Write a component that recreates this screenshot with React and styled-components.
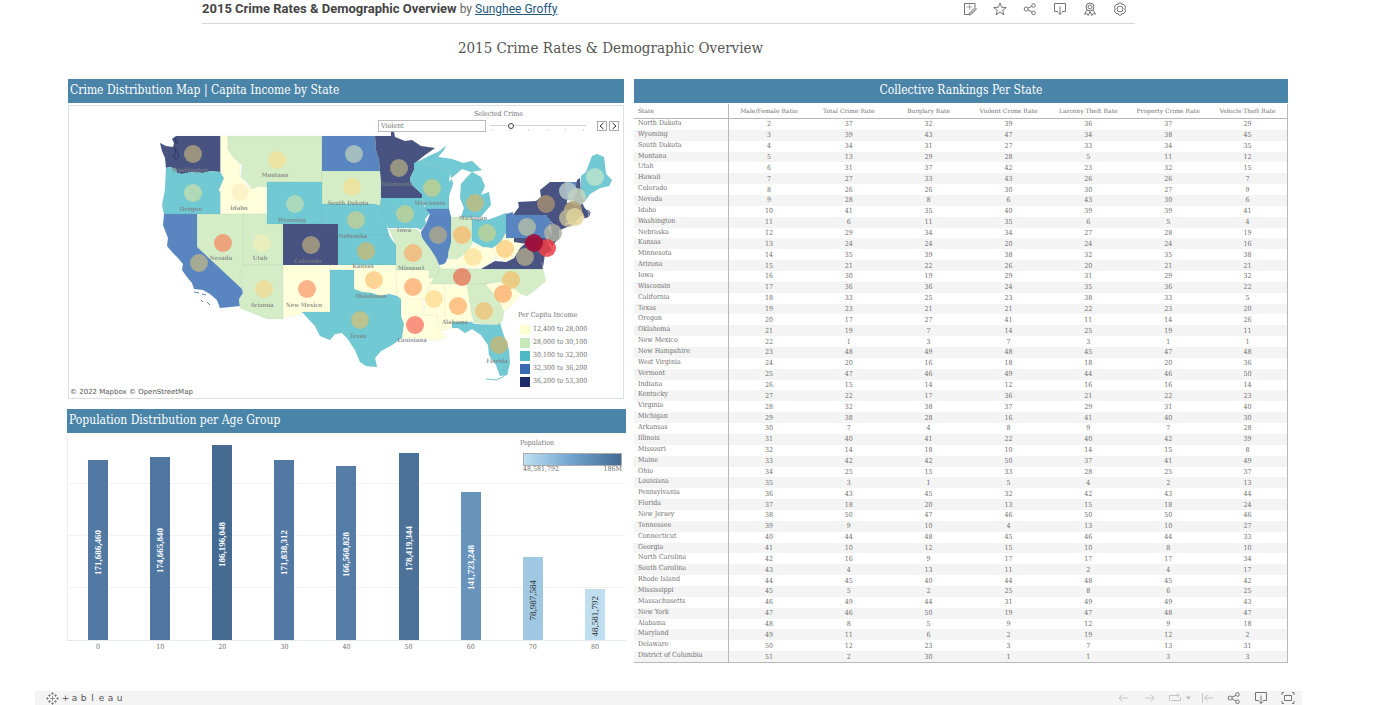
import React, { useState } from "react";
import styled, { createGlobalStyle } from "styled-components";

const serif = `"DejaVu Serif Condensed", "DejaVu Serif", serif`;
const sans = `Roboto, "Liberation Sans", sans-serif`;
const BAR_BLUE = "#4a84a8";

const GlobalStyle = createGlobalStyle`
  * { box-sizing: border-box; }
  body { margin: 0; background: #fff; color: #707070; font-family: ${serif}; }
  button, select, input { font: inherit; color: inherit; margin: 0; padding: 0; border: 0; background: none; }
`;

const Page = styled.div`
  margin: 0 98px 0 35px;
`;

const TopBar = styled.header`
  margin: 0 167px;
  height: 24px;
  padding: 0 8px 6px 0;
  display: flex;
  align-items: center;
  justify-content: space-between;
  border-bottom: 1px solid #d8d8d8;
`;

const TopTitle = styled.div`
  font: 12px/18px ${sans};
  color: #666;
  white-space: nowrap;
  strong { color: #444; margin-right: 3px; font-size: 13px; }
  a { color: #24587f; }
`;

const Tools = styled.div`
  display: flex;
  align-items: center;
  gap: ${(p) => p.$gap}px;
`;

const IconButton = styled.button`
  width: 14px;
  height: 14px;
  color: ${(p) => (p.$muted ? "#c4c4c4" : "#747474")};
  svg { display: block; width: 14px; height: 14px; fill: none; stroke: currentColor; stroke-width: 1; }
`;

const Dashboard = styled.main`
  padding: 0 14px 0 32px;
`;

const Title = styled.h1`
  margin: 0;
  padding-right: 134px;
  height: 55px;
  font-size: 15px;
  line-height: 48px;
  font-weight: 400;
  text-align: center;
  color: #555;
`;

const Columns = styled.div`
  display: grid;
  grid-template-columns: 559fr 654fr;
  gap: 8px;
  align-items: start;
`;

const Stack = styled.div`
  display: flex;
  flex-direction: column;
  gap: 10px;
`;

const Panel = styled.section`
  display: flex;
  flex-direction: column;
  gap: ${(p) => p.$gap || 0}px;
  margin: 0 ${(p) => p.$inset || 0}px 0 0;
  padding-left: ${(p) => (p.$inset ? 1 : 0)}px;
`;

const PanelTitle = styled.h2`
  margin: 0;
  padding: 0 2px;
  height: 24px;
  line-height: 22px;
  font-size: 12px;
  font-weight: 400;
  color: #fff;
  background: ${BAR_BLUE};
  text-align: ${(p) => (p.$center ? "center" : "left")};
`;

const MapBox = styled.div`
  position: relative;
  border: 1px solid #dcdfe1;
  > svg { display: block; width: 100%; height: auto; }
`;

const CrimeControl = styled.div`
  position: absolute;
  top: 2px;
  right: 4px;
  width: 241px;
`;

const ControlLabel = styled.label`
  display: block;
  text-align: center;
  font-size: 7px;
  line-height: 12px;
`;

const ControlRow = styled.div`
  display: flex;
  align-items: center;
  gap: 4px;
`;

const CrimeSelect = styled.select`
  width: 108px;
  height: 12px;
  padding-left: 2px;
  appearance: none;
  border: 1px solid #bbb;
  background: #fff;
  font-size: 7px;
  line-height: 10px;
`;

const SliderWrap = styled.div`
  width: 96px;
  height: 12px;
  padding-top: 2px;
`;

const Slider = styled.input`
  display: block;
  width: 100%;
  height: 7px;
  appearance: none;
  background: linear-gradient(#d4d4d4, #d4d4d4) center / 100% 1px no-repeat;
  &::-webkit-slider-thumb {
    appearance: none;
    width: 6px;
    height: 6px;
    border: 1px solid #444;
    border-radius: 50%;
    background: #fff;
  }
`;

const Ticks = styled.div`
  display: flex;
  justify-content: space-between;
  padding: 0 2px;
  i { width: 1px; height: 2px; background: #ddd; }
`;

const Arrows = styled.div`
  display: flex;
  gap: 2px;
  margin-left: 7px;
`;

const ArrowButton = styled.button`
  width: 10px;
  height: 10px;
  border: 1px solid #aaa;
  svg { display: block; width: 8px; height: 8px; fill: none; stroke: #333; }
`;

const IncomeLegend = styled.div`
  position: absolute;
  right: 30px;
  bottom: 10px;
  width: 75px;
  font-size: 7px;
  line-height: 13px;
  white-space: nowrap;
`;

const LegendTitle = styled.div`
  font-size: 7px;
  line-height: 16px;
`;

const LegendRow = styled.div`
  display: flex;
  align-items: center;
  gap: 3px;
  height: 13px;
  padding-left: 2px;
  &::before { content: ""; width: 10px; height: 10px; background: ${(p) => p.$color}; }
`;

const Credit = styled.div`
  position: absolute;
  left: 1px;
  bottom: 0;
  font: 7px/12px "DejaVu Sans", sans-serif;
  color: #555;
`;

const Chart = styled.div`
  position: relative;
  padding-top: 1px;
`;

const Plot = styled.div`
  display: flex;
  height: 207px;
  align-items: flex-end;
  box-shadow: inset 1px 0 #eee;
  border-bottom: 1px solid #e4eaf0;
  background: linear-gradient(#f3f3f3, #f3f3f3) 0 49px / 100% 1px no-repeat,
    linear-gradient(#f3f3f3, #f3f3f3) 0 101px / 100% 1px no-repeat,
    linear-gradient(#f3f3f3, #f3f3f3) 0 153px / 100% 1px no-repeat;
`;

const BarSlot = styled.div`
  flex: 1;
  height: 100%;
  display: flex;
  align-items: flex-end;
  justify-content: center;
`;

const Bar = styled.div`
  width: 20px;
  display: flex;
  align-items: center;
  justify-content: center;
  padding-top: 4px;
  background: ${(p) => p.$color};
  color: ${(p) => (p.$dark ? "#333" : "#fff")};
  span {
    writing-mode: vertical-rl;
    rotate: 180deg;
    font-family: "Liberation Serif", serif;
    font-size: 9px;
    line-height: 20px;
    font-weight: ${(p) => (p.$dark ? 400 : 700)};
  }
`;

const Axis = styled.div`
  display: flex;
  font-size: 7px;
  line-height: 13px;
  span { flex: 1; text-align: center; }
`;

const PopLegend = styled.div`
  position: absolute;
  top: 4px;
  right: 4px;
  width: 102px;
  font-size: 7px;
  line-height: 12px;
`;

const Ramp = styled.div`
  height: 13px;
  margin: 4px 0 0 3px;
  border: 1px solid #aaa;
  background: linear-gradient(90deg, #bfe0f2, #6ea3cd 50%, #426b93);
`;

const RampLabels = styled.div`
  display: flex;
  justify-content: space-between;
  padding-left: 3px;
  line-height: 6px;
`;

const Rankings = styled.table`
  width: 100%;
  height: 559px;
  table-layout: fixed;
  border-spacing: 0;
  border-bottom: 1px solid #b8b8b8;
  font-size: 7px;
  line-height: 10px;
  text-align: center;
  th, td { padding: 0; font-weight: 400; }
  thead th {
    height: 15px;
    border-bottom: 1px solid #b8b8b8;
    font-family: "DejaVu Serif", serif;
    font-size: 6px;
    white-space: nowrap;
  }
  th:first-child {
    width: 95px;
    padding-left: 4px;
    text-align: left;
    border-right: 1px solid #b8b8b8;
  }
  tbody th { vertical-align: top; line-height: 9px; }
  tr > :last-child { border-right: 1px solid #b8b8b8; }
  tbody tr:nth-child(even) { background: #f4f4f4; }
`;

const Footer = styled.footer`
  margin-top: 28px;
  height: 14px;
  padding: 0 7px 0 11px;
  display: flex;
  align-items: center;
  justify-content: space-between;
  background: #f4f4f4;
`;

const Logo = styled.div`
  display: flex;
  align-items: center;
  font: 9px/14px "DejaVu Sans", sans-serif;
  color: #555;
  svg { width: 13px; height: 13px; margin-right: 2px; fill: none; stroke: #777; }
  span { width: 9px; text-align: center; }
`;

const ReplayGroup = styled.div`
  display: flex;
  align-items: center;
  gap: 3px;
  margin: 0 -5px 0 -2px;
`;

const CaretButton = styled.button`
  width: 7px;
  height: 14px;
  svg { display: block; width: 7px; height: 14px; fill: #bcbcbc; }
`;

const NAVY = "#485382";
const BLUE = "#5986c1";
const TEAL = "#70c9d3";
const GREEN = "#d4edc7";
const CREAM = "#ffffdb";

const states = [
  [NAVY, "M160 143 166 146 173 147 174 143 172 139 176 136H220.500V172L211 171 203 173 192 172 182 174 177 173 176 169 170 167 166 168 165 158 162 151Z"],
  [TEAL, "M166 168 170 167 176 169 177 173 182 174 192 172 203 173 211 171 220 172 224 178 219 190 220.500 193V214H164L162 205 165 190Z"],
  [CREAM, "M220.500 136H228V149L233 157 240 164 240 176 245 182 250 188 267 186V214H220.500V193L219 190 224 178 220.500 172Z"],
  [GREEN, "M228 136H322V182H267V187L259 186 252 189 246 181 241 177 242 165 233 157 228 149Z"],
  [BLUE, "M322 136H375L376 150 379 160 380 171H322Z"],
  [GREEN, "M322 171H380V177L382 181V200L381 206 375 204H322Z"],
  [TEAL, "M267 182H322V224H267Z"],
  [NAVY, "M283 224H338V265H283Z"],
  [TEAL, "M322 204H375L381 206 385 218 389 235H338V224H322Z"],
  [TEAL, "M338 235H389L392 240 396 245V265H338Z"],
  [GREEN, "M243 214H267V224H283V265H243Z"],
  [GREEN, "M197 214H243V270L240 273 241 282 242 289 197 247Z"],
  [BLUE, "M164 214H197V247L242 289 243 293 239 299 240 306 220 308 217 300 210 294 203 290 194 289 192 283 187 277 182 270 183 264 178 258 173 253 167 246 168 238 163 225Z"],
  [GREEN, "M243 265H283V319H267L240 308 239 300 243 293 241 282 240 273Z"],
  [CREAM, "M283 265H330V312H302V314L283 318Z"],
  [CREAM, "M330 265H396L397 273V296L389 294 380 296 372 293 362 292 354 289V270H330Z"],
  [TEAL, "M330 270H354V289L362 292 372 293 380 296 389 294 401 297V316L404 324 402 338 392 345 381 351 375 358 377 367 366 366 360 362 355 350 347 338 342 333 335 334 330 340 320 336 315 326 302 312H330Z"],
  [NAVY, "M375 136H391V131L394 132 395 137 405 141 412 140 421 146 435 148 425 155 415 163 414 170 410 178 411 184 422 194V198H381V181L380 171 379 160 376 150Z"],
  [TEAL, "M381 198H422L424 206 430 213 425 219 426 224 421 230 418 228H388L384 218 380 206Z"],
  [TEAL, "M414 163 421 160 425 163 445 169 450 173 449 182 452 179 453 184 449 196V209H426L422 198V194L411 184 410 178 414 170Z"],
  [TEAL, "M421 160 431 155 438 152 446 146 444 150 438 157 452 159 463 163 472 161 482 170 471 172 462 169 455 175 451 178 450 173 445 169 425 163Z"],
  [TEAL, "M461 217 464 208 460 198 461 184 467 177 472 172 481 177 485 186 481 195 489 192 491 205 484 213 481 217Z"],
  [BLUE, "M426 209H449L451 217V243L448 257 445 264 439 265 436 258 431 250 422 239 421 232 426 224 430 214Z"],
  [GREEN, "M451 217H472V246L466 253 457 259 449 260 448 253 451 243Z"],
  [TEAL, "M472 219 487 220 496 217 506 213V233L500 243 492 248 483 247 472 241Z"],
  [CREAM, "M438 269 445 263 449 259 457 259 466 253 472 244 483 247 492 248 496 257 484 268Z"],
  [GREEN, "M433 269H511L501 277 487 284H430Z"],
  [GREEN, "M389 229H418L423 239 431 250 436 258 439 265 441 268 434 278H429V270H396V245Z"],
  [CREAM, "M396 270H429V278H434L430 285 425 300H402L397 296Z"],
  [CREAM, "M401 299H423L424 315H437L440 328 446 338 434 341 422 338 402 338 404 324 401 316Z"],
  [CREAM, "M425 300 430 284H445V330H439L437 315H424Z"],
  [CREAM, "M445 284H467L472 310V322H452L453 328 445 330Z"],
  [GREEN, "M467 284H486L498 299 504 312 502 322 497 325 474 323 471 310Z"],
  [TEAL, "M452 322H472L474 324 497 325 500 323 503 333 509 350 510 363 507 375 500 376 496 365 489 355 488 345 481 335 472 329 465 333 458 328 452 328Z"],
  [CREAM, "M485 284 497 282 508 283 521 294 514 303 504 312 498 299Z"],
  [GREEN, "M486 284 501 277 511 269H543L546 281 535 290 527 296 521 294 508 283 497 282Z"],
  [NAVY, "M481 269 495 261 506 262 514 258 520 248 527 242 536 248 540 258 543 269Z"],
  [CREAM, "M492 249 500 243 506 233V238H514V242L524 240 520 248 514 258 506 262 498 259Z"],
  [NAVY, "M514 238H546L552 251 545 254 543 267 539 257 536 248 527 244 514 242Z"],
  [NAVY, "M513 215 519 207 518 202 536 201 541 197 540 190 550 182H566L567 200 566 218 565 225 577 223 560 230 549 220 546 215Z"],
  [BLUE, "M506 214 513 212V215H546L551 221 548 229 552 234 546 238H506Z"],
  [NAVY, "M550 222 559 228 559 238 552 246 547 239 552 234Z"],
  [BLUE, "M565 182H578V200H567Z"],
  [NAVY, "M577 180 580 178 581 196 585 201 579 204 574 202Z"],
  [NAVY, "M566 203 582 202 584 207 589 213 587 218 581 215 575 222 566 222Z"],
  [TEAL, "M581 176 586 172 592 156 597 154 604 157 606 174 612 180 609 186 600 188 590 194 585 201 581 196Z"],
];

const bubbles = [
  [193, 154, "#a99f7f"], [277, 160, "#f2e19c"], [193, 193, "#bcdcb1"], [240, 192, "#fcf3c5"],
  [295, 204, "#b6dcb8"], [354, 154, "#b0c5bd"], [352, 187, "#efe198"], [356, 220, "#bdcf9a"],
  [399, 168, "#a5a083"], [432, 188, "#bccf92"], [405, 214, "#bdd29a"], [475, 203, "#bebd82"],
  [223, 243, "#f29870"], [262, 243, "#edeebb"], [311, 245, "#a89e7f"], [366, 251, "#c0bd80"],
  [199, 263, "#b3b08d"], [264, 289, "#efdd99"], [307, 289, "#fba97b"], [360, 320, "#c5c383"],
  [374, 280, "#fdcd88"], [413, 253, "#f4b87a"], [438, 235, "#aaa68e"], [462, 235, "#f5be76"],
  [487, 233, "#bbd199"], [473, 257, "#fee4a1"], [505, 249, "#fdd186"], [525, 257, "#a6a38c"],
  [527, 227, "#b0bba9"], [546, 204, "#a38c72"], [595, 177, "#b9e3cb"], [568, 191, "#b7c8cb"],
  [577, 197, "#c5d5bf"], [573, 210, "#bba777"], [568, 218, "#bcb798"], [575, 217, "#e5d79b"],
  [553, 233, "#aeb0a1"], [547, 248, "#ee4048"], [534, 243, "#a90832"], [462, 277, "#e87e63"],
  [511, 280, "#f1c578"], [503, 294, "#fdb675"], [484, 311, "#edc77c"], [458, 306, "#fdb979"],
  [434, 299, "#fde09a"], [413, 287, "#fdb37a"], [415, 325, "#f98270"], [499, 345, "#c1b879"],
];

const stateLabels = [
  [190, 172, "Washington"], [275, 177, "Montana"], [191, 211, "Oregon"], [239, 210, "Idaho"],
  [292, 222, "Wyoming"], [348, 205, "South Dakota"], [353, 238, "Nebraska"], [397, 186, "Minnesota"],
  [430, 205, "Wisconsin"], [404, 232, "Iowa"], [473, 220, "Michigan"], [221, 260, "Nevada"],
  [260, 260, "Utah"], [308, 263, "Colorado"], [363, 268, "Kansas"], [411, 270, "Missouri"],
  [262, 307, "Arizona"], [304, 307, "New Mexico"], [358, 338, "Texas"], [371, 298, "Oklahoma"],
  [412, 342, "Louisiana"], [455, 324, "Alabama"], [497, 363, "Florida"],
];

const incomeBands = [
  ["#ffffd4", "12,400 to 28,000"],
  ["#c7e9b9", "28,000 to 30,100"],
  ["#4fb8c6", "30,100 to 32,300"],
  ["#376bb2", "32,300 to 36,200"],
  ["#1d2c67", "36,200 to 53,300"],
];

const population = [
  [0, 171686460, "#5179a3"], [10, 174665840, "#4f77a1"], [20, 186196048, "#456b92"],
  [30, 171838312, "#5179a3"], [40, 166560828, "#547ca7"], [50, 178419344, "#4c7299"],
  [60, 141723248, "#6893bb"], [70, 78987584, "#9fc8e3"], [80, 48581792, "#bfdff1"],
];
const PLOT_MAX = 196700000;

const columns = ["Male/Female Ratio", "Total Crime Rate", "Burglary Rate", "Violent Crime Rate", "Larceny Theft Rate", "Property Crime Rate", "Vehicle Theft Rate"];

const rankings = `North Dakota,2,37,32,39,36,37,29
Wyoming,3,39,43,47,34,38,45
South Dakota,4,34,31,27,33,34,35
Montana,5,13,29,28,5,11,12
Utah,6,31,37,42,23,32,15
Hawaii,7,27,33,43,26,26,7
Colorado,8,26,26,30,30,27,9
Nevada,9,28,8,6,43,30,6
Idaho,10,41,35,40,39,39,41
Washington,11,6,11,35,6,5,4
Nebraska,12,29,34,34,27,28,19
Kansas,13,24,24,20,24,24,16
Minnesota,14,35,39,38,32,35,38
Arizona,15,21,22,26,20,21,21
Iowa,16,30,19,29,31,29,32
Wisconsin,17,36,36,24,35,36,22
California,18,33,25,23,38,33,5
Texas,19,23,21,21,22,23,20
Oregon,20,17,27,41,11,14,26
Oklahoma,21,19,7,14,25,19,11
New Mexico,22,1,3,7,3,1,1
New Hampshire,23,48,49,48,45,47,48
West Virginia,24,20,16,18,18,20,36
Vermont,25,47,46,49,44,46,50
Indiana,26,15,14,12,16,16,14
Kentucky,27,22,17,36,21,22,23
Virginia,28,32,38,37,29,31,40
Michigan,29,38,28,16,41,40,30
Arkansas,30,7,4,8,9,7,28
Illinois,31,40,41,22,40,42,39
Missouri,32,14,18,10,14,15,8
Maine,33,42,42,50,37,41,49
Ohio,34,25,15,33,28,25,37
Louisiana,35,3,1,5,4,2,13
Pennsylvania,36,43,45,32,42,43,44
Florida,37,18,20,13,15,18,24
New Jersey,38,50,47,46,50,50,46
Tennessee,39,9,10,4,13,10,27
Connecticut,40,44,48,45,46,44,33
Georgia,41,10,12,15,10,8,10
North Carolina,42,16,9,17,17,17,34
South Carolina,43,4,13,11,2,4,17
Rhode Island,44,45,40,44,48,45,42
Mississippi,45,5,2,25,8,6,25
Massachusetts,46,49,44,31,49,49,43
New York,47,46,50,19,47,48,47
Alabama,48,8,5,9,12,9,18
Maryland,49,11,6,2,19,12,2
Delaware,50,12,23,3,7,13,31
District of Columbia,51,2,30,1,1,3,3`.split("\n").map((line) => line.split(","));

const icons = {
  edit: <><path d="M12 5V1.500H1.500V12.500H6" /><path d="M3.500 5H9M6.500 2.500V8" opacity=".6" /><path d="M12 5.500 13.500 7 8 12.500 6 13 6.500 11ZM7.500 12 12.500 7" /></>,
  star: <path d="M7 1 8.700 5.300 13.300 5.500 9.700 8.300 11 12.800 7 10.200 3 12.800 4.300 8.300.7 5.500 5.300 5.300Z" />,
  share: <><circle cx="3.200" cy="7" r="2" /><circle cx="10.500" cy="3.500" r="1.800" /><circle cx="10.500" cy="10.800" r="1.800" /><path d="M5 6.200 8.900 4.300M5 7.900 8.900 10" /></>,
  download: <><path d="M5 9.500H1.500V1.500H12.500V9.500H9" /><path d="M7 4.500V12.500M5 10.500 7 12.500 9 10.500" /></>,
  award: <><circle cx="7" cy="5" r="4" /><circle cx="7" cy="5" r="2" /><path d="M4 8 1.500 12 4 11.700 5.200 13.500 7 9.500 8.800 13.500 10 11.700 12.500 12 10 8" /></>,
  gear: <><path d="M5.500 1H8.500L9 2.500 11 2.500 12.500 5 11.800 7 12.500 9 11 11.500 9 11.500 8.500 13H5.500L5 11.500 3 11.500 1.500 9 2.200 7 1.500 5 3 2.500 5 2.500Z" /><circle cx="7" cy="7" r="3" /></>,
  undo: <path d="M12 7H3M6.500 3.500 3 7 6.500 10.500" />,
  redo: <path d="M2 7H11M7.500 3.500 11 7 7.500 10.500" />,
  replay: <path d="M2 9.500H1.500V4.500H11M9 2.500 11 4.500 9 6.500M12.500 6V9.500H3" />,
  reset: <path d="M2.500 2V12M13 7H4.500M8 3.500 4.500 7 8 10.500" />,
  full: <><path d="M3.500 4.500H10.500V9.500H3.500Z" /><path d="M3 1.500H1V4M11 1.500H13V4M3 12.500H1V10M11 12.500H13V10" /></>,
};

const Tool = ({ name, label, muted }) => (
  <IconButton type="button" aria-label={label} $muted={muted}>
    <svg viewBox="0 0 14 14" aria-hidden="true">{icons[name]}</svg>
  </IconButton>
);

function CrimeMap() {
  return (
    <svg viewBox="69 106 554 292" role="img" aria-label="Map of per capita income and crime by state">
      {states.map(([fill, d], i) => (
        <path key={i} d={d} fill={fill} stroke="#5a8c8c" strokeOpacity=".15" strokeWidth=".5" />
      ))}
      <path d="M175 148 178 152 179 157 176 160 173 156 176 155ZM175 138 178 141 176 144Z" fill={NAVY} stroke="#28346a" strokeWidth=".8" />
      <path d="M584 218 589 216 590 212 587 210" fill="none" stroke={NAVY} />
      <path d="M194 292 199 293M202 294 206 295M201 300 203 302M207 302 210 305" stroke={BLUE} />
      <path d="M486 379 496 380 503 377 508 373" fill="none" stroke={TEAL} />
      <g opacity=".95">
        {bubbles.map(([x, y, c]) => <circle key={`${x}-${y}`} cx={x} cy={y} r="9" fill={c} fillOpacity=".9" />)}
      </g>
      <g fill="#7c8080" fillOpacity=".8" fontSize="6" fontWeight="700" fontFamily={serif} textAnchor="middle">
        {stateLabels.map(([x, y, t]) => <text key={t} x={x} y={y}>{t}</text>)}
      </g>
    </svg>
  );
}

export default function App() {
  const [step, setStep] = useState(1);
  return (
    <>
      <GlobalStyle />
      <Page>
        <TopBar>
          <TopTitle>
            <strong>2015 Crime Rates &amp; Demographic Overview</strong>by <a href="#author">Sunghee Groffy</a>
          </TopTitle>
          <Tools $gap={16}>
            <Tool name="edit" label="Edit" />
            <Tool name="star" label="Favorite" />
            <Tool name="share" label="Share" />
            <Tool name="download" label="Download" />
            <Tool name="award" label="Nominate" />
            <Tool name="gear" label="Settings" />
          </Tools>
        </TopBar>
        <Dashboard>
          <Title>2015 Crime Rates &amp; Demographic Overview</Title>
          <Columns>
            <Stack>
              <Panel $gap={2} $inset={2}>
                <PanelTitle>Crime Distribution Map | Capita Income by State</PanelTitle>
                <MapBox>
                  <CrimeMap />
                  <CrimeControl>
                    <ControlLabel htmlFor="crime">Selected Crime</ControlLabel>
                    <ControlRow>
                      <CrimeSelect id="crime"><option>Violent</option></CrimeSelect>
                      <SliderWrap>
                        <Slider type="range" aria-label="Crime step" min="0" max="5" value={step} onChange={(e) => setStep(Number(e.target.value))} />
                        <Ticks>{[0, 1, 2, 3, 4, 5].map((n) => <i key={n} />)}</Ticks>
                      </SliderWrap>
                      <Arrows>
                        <ArrowButton type="button" aria-label="Previous" onClick={() => setStep(Math.max(0, step - 1))}>
                          <svg viewBox="0 0 8 8"><path d="M5.500 1 2 4 5.500 7" /></svg>
                        </ArrowButton>
                        <ArrowButton type="button" aria-label="Next" onClick={() => setStep(Math.min(5, step + 1))}>
                          <svg viewBox="0 0 8 8"><path d="M2.500 1 6 4 2.500 7" /></svg>
                        </ArrowButton>
                      </Arrows>
                    </ControlRow>
                  </CrimeControl>
                  <IncomeLegend>
                    <LegendTitle>Per Capita Income</LegendTitle>
                    {incomeBands.map(([color, text]) => <LegendRow key={text} $color={color}>{text}</LegendRow>)}
                  </IncomeLegend>
                  <Credit>© 2022 Mapbox © OpenStreetMap</Credit>
                </MapBox>
              </Panel>
              <Panel>
                <PanelTitle>Population Distribution per Age Group</PanelTitle>
                <Chart>
                  <Plot>
                    {population.map(([age, count, color]) => (
                      <BarSlot key={age}>
                        <Bar $color={color} $dark={age >= 70} style={{ height: `${(count / PLOT_MAX) * 100}%` }}>
                          <span>{count.toLocaleString("en-US")}</span>
                        </Bar>
                      </BarSlot>
                    ))}
                  </Plot>
                  <Axis>{population.map(([age]) => <span key={age}>{age}</span>)}</Axis>
                  <PopLegend>
                    Population
                    <Ramp />
                    <RampLabels><span>48,581,792</span><span>186M</span></RampLabels>
                  </PopLegend>
                </Chart>
              </Panel>
            </Stack>
            <Panel $gap={1}>
              <PanelTitle $center>Collective Rankings Per State</PanelTitle>
              <Rankings>
                <thead>
                  <tr>
                    <th scope="col">State</th>
                    {columns.map((c) => <th key={c} scope="col">{c}</th>)}
                  </tr>
                </thead>
                <tbody>
                  {rankings.map(([name, ...ranks]) => (
                    <tr key={name}>
                      <th scope="row">{name}</th>
                      {ranks.map((rank, i) => <td key={i}>{rank}</td>)}
                    </tr>
                  ))}
                </tbody>
              </Rankings>
            </Panel>
          </Columns>
        </Dashboard>
        <Footer>
          <Logo aria-label="tableau">
            <svg viewBox="0 0 13 13" aria-hidden="true">
              <path d="M6.500 4V9M4 6.500H9M6.500 0V3M5 1.500H8M6.500 10V13M5 11.500H8M1.500 5V8M0 6.500H3M11.500 5V8M10 6.500H13M3.500 2V5M2 3.500H5M9.500 2V5M8 3.500H11M3.500 8V11M2 9.500H5M9.500 8V11M8 9.500H11" strokeWidth=".7" />
            </svg>
            {["+", "a", "b", "l", "e", "a", "u"].map((ch, i) => <span key={i}>{ch}</span>)}
          </Logo>
          <Tools $gap={13}>
            <Tool name="undo" label="Undo" muted />
            <Tool name="redo" label="Redo" muted />
            <ReplayGroup>
              <Tool name="replay" label="Replay" muted />
              <CaretButton type="button" aria-label="Replay options">
                <svg viewBox="0 0 7 14"><path d="M1 5.500H6L3.500 9Z" /></svg>
              </CaretButton>
            </ReplayGroup>
            <Tool name="reset" label="Revert" muted />
            <Tool name="share" label="Share view" />
            <Tool name="download" label="Download view" />
            <Tool name="full" label="Full screen" />
          </Tools>
        </Footer>
      </Page>
    </>
  );
}
